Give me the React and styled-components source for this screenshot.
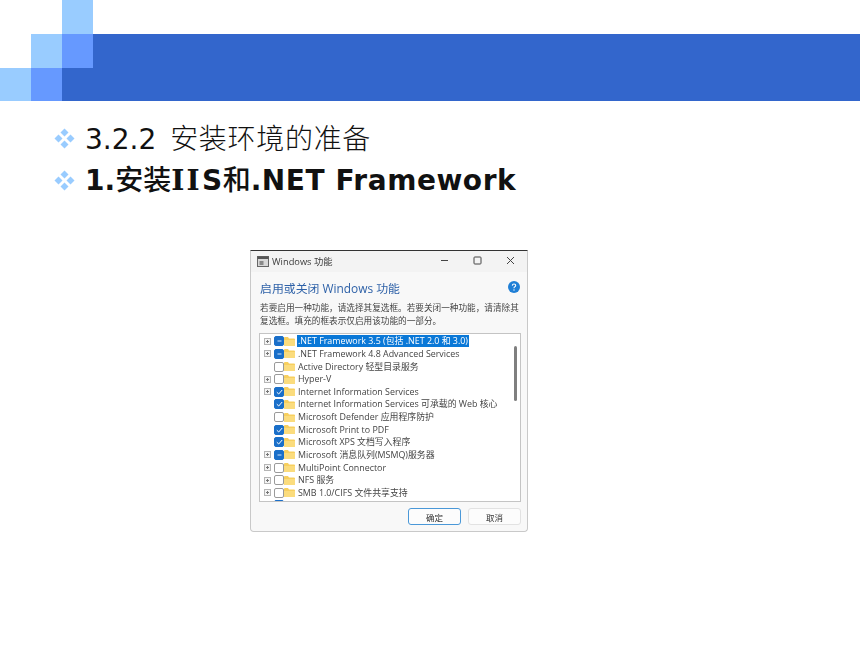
import React from 'react'
import styled, { createGlobalStyle } from 'styled-components'

const GlobalStyle = createGlobalStyle`
  html, body {
    margin: 0;
    padding: 0;
    background: #fff;
  }
`

const Slide = styled.div`
  width: 860px;
  height: 645px;
  overflow: hidden;
  background: #fff;
  font-family: "DejaVu Sans", "Noto Sans CJK SC", sans-serif;
`

const Banner = styled.div`
  display: grid;
  grid-template-columns: 31px 31px 31px 1fr;
  grid-template-rows: 34px 34px 33px;
  height: 101px;
`

const Tile = styled.div`
  background: ${p => p.$color || 'transparent'};
`

const Outline = styled.ul`
  list-style: none;
  margin: 0;
  padding: 16px 0 0 54px;
  display: flex;
  flex-direction: column;
`

const Point = styled.li`
  display: flex;
  align-items: center;
  gap: 10px;
  height: 42px;
  font-size: 28px;
  font-weight: ${p => (p.$bold ? 700 : 400)};
  color: #111;
  white-space: pre;
`

const PointText = styled.span`
  position: relative;
  top: ${p => (p.$bold ? '-2px' : '-1px')};
`

const Han = styled.span`
  font-family: "Noto Sans CJK SC", sans-serif;
  font-weight: ${p => (p.$bold ? 500 : 300)};
  letter-spacing: ${p => (p.$bold ? '0' : '0.7px')};
  margin-left: ${p => (p.$bold ? '0' : '5px')};
`

const Latin = styled.span`
  letter-spacing: 0.55px;
`

const SlabCaps = styled.span`
  font-family: "DejaVu Serif", serif;
  letter-spacing: 2.3px;
`

const Stage = styled.div`
  display: flex;
  padding: 49px 0 0 250px;
`

const Dialog = styled.div`
  width: 278px;
  height: 282px;
  box-sizing: border-box;
  background: #f3f3f3;
  border: 1px solid #c9c9c9;
  border-top-color: #333;
  border-radius: 0 0 4px 4px;
  display: flex;
  flex-direction: column;
  font-family: "Open Sans", "Noto Sans CJK SC", sans-serif;
  color: #3a3a3a;
  filter: blur(0.6px);
`

const TitleBar = styled.div`
  display: flex;
  align-items: center;
  height: 21px;
  flex: none;
  padding: 0 12px 2px 6px;
  box-sizing: border-box;
  gap: 3px;
  background: #f3f3f3;
  font-size: 9.3px;
`

const TitleText = styled.span`
  flex: 1;
`

const WinButtons = styled.div`
  display: flex;
  gap: 24px;
  align-items: center;
  color: #333;
`

const Body = styled.div`
  flex: 1;
  display: flex;
  flex-direction: column;
  background: #f8f8f8;
  border-radius: 0 0 4px 4px;
  padding: 0 6px 6px 8px;
`

const Heading = styled.div`
  display: flex;
  align-items: center;
  justify-content: space-between;
  height: 28px;
  margin-top: 1px;
  padding: 0 1px;
  font-size: 11.9px;
  color: #2f62a8;
`

const Hint = styled.p`
  margin: 1px 0 5px;
  padding-left: 1px;
  font-size: 8.65px;
  line-height: 13px;
  color: #444;
`

const Tree = styled.div`
  position: relative;
  height: 169px;
  flex: none;
  box-sizing: border-box;
  background: #fff;
  border: 1px solid #c4c4c4;
  padding: 1px 0 0 4px;
  overflow: hidden;
`

const Row = styled.div`
  display: flex;
  align-items: center;
  height: 12.63px;
  font-size: 8.9px;
  white-space: nowrap;
  color: #444;
`

const Expander = styled.span`
  width: 7px;
  height: 7px;
  flex: none;
  margin-right: 3px;
  display: flex;
  visibility: ${p => (p.$hidden ? 'hidden' : 'visible')};
`

const Check = styled.span`
  width: 10px;
  height: 10px;
  flex: none;
  border-radius: 2px;
  box-sizing: border-box;
  border: 1px solid ${p => (p.$state === 'off' ? '#9a9a9a' : '#1a6fc9')};
  background: ${p => (p.$state === 'off' ? '#fff' : '#1a6fc9')};
  display: flex;
  align-items: center;
  justify-content: center;
`

const Folder = styled.span`
  display: flex;
  flex: none;
  margin: 0 3px 0 0;
`

const Label = styled.span`
  padding: 0 1px;
  margin-left: -1px;
  background: ${p => (p.$selected ? '#0a78d7' : 'transparent')};
  color: ${p => (p.$selected ? '#fff' : 'inherit')};
  line-height: 12px;
`

const Thumb = styled.div`
  position: absolute;
  right: 3px;
  top: 12px;
  width: 3px;
  height: 55px;
  border-radius: 2px;
  background: #7f7f7f;
`

const Actions = styled.div`
  display: flex;
  justify-content: flex-end;
  gap: 7px;
  margin-top: 6px;
`

const Button = styled.button`
  width: 53px;
  height: 17px;
  padding: 0;
  box-sizing: border-box;
  border-radius: 3px;
  border: 1px solid ${p => (p.$primary ? '#4a98d8' : '#e2e2e2')};
  background: #fcfcfc;
  font-family: "Noto Sans CJK SC", sans-serif;
  font-size: 8.5px;
  color: #333;
`

const Diamonds = () => (
  <svg width="21" height="21" viewBox="0 0 21 21" fill="#99ccff" style={{ flex: 'none' }}>
    <path d="M10.5 0.5 L14.5 4.5 L10.5 8.5 L6.5 4.5 Z" />
    <path d="M4.5 6.5 L8.5 10.5 L4.5 14.5 L0.5 10.5 Z" />
    <path d="M16.5 6.5 L20.5 10.5 L16.5 14.5 L12.5 10.5 Z" />
    <path d="M10.5 12.5 L14.5 16.5 L10.5 20.5 L6.5 16.5 Z" />
  </svg>
)

const PlusBox = () => (
  <svg width="7" height="7" viewBox="0 0 7 7">
    <rect x="0.5" y="0.5" width="6" height="6" fill="#f4f4f4" stroke="#b5b5b5" />
    <path d="M2 3.5H5M3.5 2V5" stroke="#777" />
  </svg>
)

const FolderIcon = () => (
  <svg width="11" height="9" viewBox="0 0 11 9">
    <path d="M0 1 Q0 0 1 0 H4 L5 1.5 H10 Q11 1.5 11 2.5 V8 Q11 9 10 9 H1 Q0 9 0 8 Z" fill="#f7cf5e" />
    <path d="M0 3 H11 V8 Q11 9 10 9 H1 Q0 9 0 8 Z" fill="#fbdc7d" />
  </svg>
)

const CheckMark = ({ state }) => {
  if (state === 'off') return null
  if (state === 'part') {
    return (
      <svg width="5" height="2" viewBox="0 0 5 2">
        <path d="M0.5 1H4.5" stroke="#cfe4fa" strokeWidth="1" />
      </svg>
    )
  }
  return (
    <svg width="7" height="6" viewBox="0 0 7 6">
      <path d="M0.8 3.2 L2.7 5 L6.2 1" stroke="#fff" strokeWidth="1" fill="none" />
    </svg>
  )
}

const features = [
  { label: '.NET Framework 3.5 (包括 .NET 2.0 和 3.0)', state: 'part', tree: true, selected: true },
  { label: '.NET Framework 4.8 Advanced Services', state: 'part', tree: true },
  { label: 'Active Directory 轻型目录服务', state: 'off' },
  { label: 'Hyper-V', state: 'off', tree: true },
  { label: 'Internet Information Services', state: 'on', tree: true },
  { label: 'Internet Information Services 可承载的 Web 核心', state: 'on' },
  { label: 'Microsoft Defender 应用程序防护', state: 'off' },
  { label: 'Microsoft Print to PDF', state: 'on' },
  { label: 'Microsoft XPS 文档写入程序', state: 'on' },
  { label: 'Microsoft 消息队列(MSMQ)服务器', state: 'part', tree: true },
  { label: 'MultiPoint Connector', state: 'off', tree: true },
  { label: 'NFS 服务', state: 'off', tree: true },
  { label: 'SMB 1.0/CIFS 文件共享支持', state: 'off', tree: true },
  { label: '', state: 'part', tree: false },
]

const App = () => (
  <Slide>
    <GlobalStyle />
    <Banner>
      <Tile />
      <Tile />
      <Tile $color="#99ccff" />
      <Tile />
      <Tile />
      <Tile $color="#99ccff" />
      <Tile $color="#6699ff" />
      <Tile $color="#3366cc" />
      <Tile $color="#99ccff" />
      <Tile $color="#6699ff" />
      <Tile $color="#3366cc" />
      <Tile $color="#3366cc" />
    </Banner>
    <Outline>
      <Point>
        <Diamonds />
        <PointText>3.2.2 <Han>安装环境的准备</Han></PointText>
      </Point>
      <Point $bold>
        <Diamonds />
        <PointText $bold>1.<Han $bold>安装</Han><SlabCaps>II</SlabCaps><Latin>S</Latin><Han $bold>和</Han><Latin>.NET Framework</Latin></PointText>
      </Point>
    </Outline>
    <Stage>
      <Dialog>
        <TitleBar>
          <svg width="12" height="12" viewBox="0 0 12 12">
            <rect x="0.5" y="1.5" width="11" height="10" fill="#d8d8d8" stroke="#666" />
            <rect x="0.5" y="1.5" width="11" height="2.5" fill="#555" />
            <rect x="2.5" y="6" width="4" height="4" fill="#8a8a8a" />
          </svg>
          <TitleText>Windows 功能</TitleText>
          <WinButtons>
            <svg width="9" height="9" viewBox="0 0 9 9"><path d="M1 4.5H8" stroke="#444" /></svg>
            <svg width="9" height="9" viewBox="0 0 9 9"><rect x="1" y="1" width="7" height="7" rx="0.8" fill="none" stroke="#444" /></svg>
            <svg width="9" height="9" viewBox="0 0 9 9"><path d="M1 1L8 8M8 1L1 8" stroke="#444" /></svg>
          </WinButtons>
        </TitleBar>
        <Body>
          <Heading>
            <span>启用或关闭 Windows 功能</span>
            <svg width="12" height="12" viewBox="0 0 12 12">
              <circle cx="6" cy="6" r="6" fill="#1f7fd6" />
              <path d="M4.3 4.6 Q4.4 3 6 3 Q7.7 3 7.7 4.5 Q7.7 5.3 6.8 5.8 Q6 6.2 6 7.2" stroke="#fff" strokeWidth="1.1" fill="none" />
              <circle cx="6" cy="9" r="0.7" fill="#fff" />
            </svg>
          </Heading>
          <Hint>若要启用一种功能，请选择其复选框。若要关闭一种功能，请清除其复选框。填充的框表示仅启用该功能的一部分。</Hint>
          <Tree>
            {features.map((f, i) => (
              <Row key={i}>
                <Expander $hidden={!f.tree}><PlusBox /></Expander>
                <Check $state={f.state}><CheckMark state={f.state} /></Check>
                <Folder><FolderIcon /></Folder>
                {f.label && <Label $selected={f.selected}>{f.label}</Label>}
              </Row>
            ))}
            <Thumb />
          </Tree>
          <Actions>
            <Button $primary>确定</Button>
            <Button>取消</Button>
          </Actions>
        </Body>
      </Dialog>
    </Stage>
  </Slide>
)

export default App
